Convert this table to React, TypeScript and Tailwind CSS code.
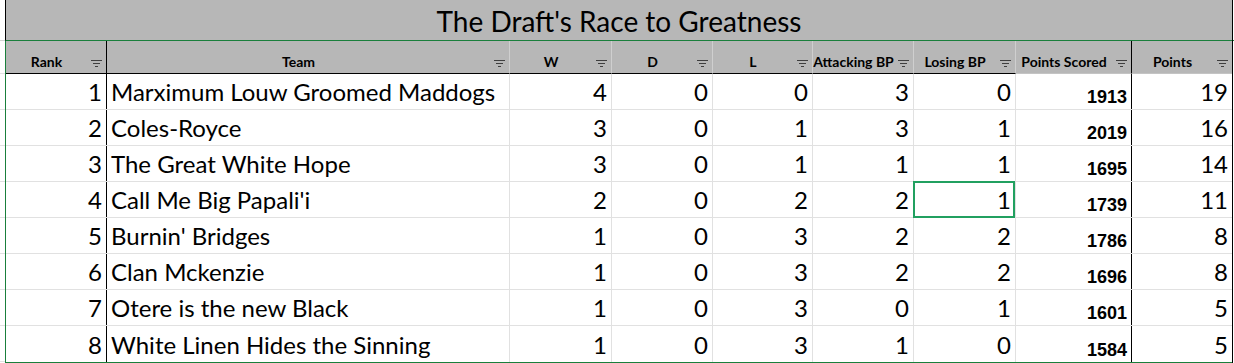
import React from 'react';

type Row = {
  rank: number;
  team: string;
  w: number;
  d: number;
  l: number;
  abp: number;
  lbp: number;
  scored: number;
  points: number;
};

const rows: Row[] = [
  { rank: 1, team: 'Marximum Louw Groomed Maddogs', w: 4, d: 0, l: 0, abp: 3, lbp: 0, scored: 1913, points: 19 },
  { rank: 2, team: 'Coles-Royce', w: 3, d: 0, l: 1, abp: 3, lbp: 1, scored: 2019, points: 16 },
  { rank: 3, team: 'The Great White Hope', w: 3, d: 0, l: 1, abp: 1, lbp: 1, scored: 1695, points: 14 },
  { rank: 4, team: "Call Me Big Papali'i", w: 2, d: 0, l: 2, abp: 2, lbp: 1, scored: 1739, points: 11 },
  { rank: 5, team: "Burnin' Bridges", w: 1, d: 0, l: 3, abp: 2, lbp: 2, scored: 1786, points: 8 },
  { rank: 6, team: 'Clan Mckenzie', w: 1, d: 0, l: 3, abp: 2, lbp: 2, scored: 1696, points: 8 },
  { rank: 7, team: 'Otere is the new Black', w: 1, d: 0, l: 3, abp: 0, lbp: 1, scored: 1601, points: 5 },
  { rank: 8, team: 'White Linen Hides the Sinning', w: 1, d: 0, l: 3, abp: 1, lbp: 0, scored: 1584, points: 5 },
];

// column widths include the 1px right border
const cols = [
  { key: 'rank', label: 'Rank', w: 'w-[101px]', hb: 'border-r-black', bb: 'border-r-black' },
  { key: 'team', label: 'Team', w: 'w-[403px]', hb: 'border-r-[#cfcfcf]', bb: 'border-r-[#e1e1e1]' },
  { key: 'w', label: 'W', w: 'w-[102px]', hb: 'border-r-[#cfcfcf]', bb: 'border-r-[#e1e1e1]' },
  { key: 'd', label: 'D', w: 'w-[101px]', hb: 'border-r-[#cfcfcf]', bb: 'border-r-[#e1e1e1]' },
  { key: 'l', label: 'L', w: 'w-[100px]', hb: 'border-r-[#cfcfcf]', bb: 'border-r-[#e1e1e1]' },
  { key: 'abp', label: 'Attacking BP', w: 'w-[101px]', hb: 'border-r-[#cfcfcf]', bb: 'border-r-[#e1e1e1]' },
  { key: 'lbp', label: 'Losing BP', w: 'w-[102px]', hb: 'border-r-[#cfcfcf]', bb: 'border-r-[#e1e1e1]' },
  { key: 'scored', label: 'Points Scored', w: 'w-[116px]', hb: 'border-r-black', bb: 'border-r-black' },
] as const;

function FilterIcon() {
  return (
    <svg width="11" height="7" viewBox="0 0 11 7" className="block" fill="#3f3f3f">
      <rect x="0" y="0" width="11" height="1" />
      <rect x="2" y="3" width="7" height="1" />
      <rect x="4" y="6" width="3" height="1" />
    </svg>
  );
}

function HeaderCell({ label, className }: { label: string; className: string }) {
  return (
    <div className={`h-full flex items-end pb-[4px] bg-[#b7b7b7] ${className}`}>
      <span className="flex-1 text-center text-[14px] leading-none font-bold text-black whitespace-nowrap">
        {label}
      </span>
      <div className="w-[19px] shrink-0 flex justify-end pr-[4px] mb-[2px]">
        <FilterIcon />
      </div>
    </div>
  );
}

function NumCell({ value, className, selected }: { value: number; className: string; selected?: boolean }) {
  return (
    <div className={`relative h-full flex items-end justify-end pr-[4px] pb-[5px] text-[24px] leading-none ${className}`}>
      {value}
      {selected && (
        <div className="absolute -left-[1px] -top-[1px] right-0 -bottom-[1px] border-2 border-[#21a060]" />
      )}
    </div>
  );
}

export default function App() {
  return (
    <div className="w-[1234px] h-[363px] bg-white flex font-['Lato','Liberation_Sans',sans-serif] text-black overflow-hidden">
      {/* row-heading gutter */}
      <div className="w-[5px] flex flex-col">
        <div className="h-[41px] border-b border-[#d4d4d4]" />
        <div className="h-[33px] border-b border-[#e1e1e1]" />
        {rows.map(r => (
          <div key={r.rank} className="h-[36px] border-b border-[#e1e1e1]" />
        ))}
      </div>

      {/* sheet */}
      <div className="w-[1228px] flex flex-col border-r border-black">
        <div className="h-[41px] bg-[#b7b7b7] border-l border-l-black border-b border-b-[#1a7f3c] flex items-center justify-center">
          <span className="text-[28px] leading-none pt-[1px]">The Draft's Race to Greatness</span>
        </div>

        <div className="flex flex-col border-l border-b border-[#1a7f3c]">
          {/* column headers */}
          <div className="h-[33px] flex">
            {cols.map((c, i) => (
              <HeaderCell
                key={c.key}
                label={c.label}
                className={`${c.w} border-r ${c.hb} border-b ${i < 7 ? 'border-b-black' : 'border-b-[#c4c4c4]'}`}
              />
            ))}
            <HeaderCell label="Points" className="w-[100px] border-b border-b-[#c4c4c4]" />
          </div>

          {rows.map((r, idx) => (
            <div
              key={r.rank}
              className={`h-[36px] flex ${idx < rows.length - 1 ? 'border-b border-[#e1e1e1]' : ''}`}
            >
              <NumCell value={r.rank} className={`${cols[0].w} border-r ${cols[0].bb}`} />
              <div className={`${cols[1].w} h-full border-r ${cols[1].bb} flex items-end pl-[4px] pb-[5px] text-[24px] leading-none whitespace-nowrap`}>
                {r.team}
              </div>
              <NumCell value={r.w} className={`${cols[2].w} border-r ${cols[2].bb}`} />
              <NumCell value={r.d} className={`${cols[3].w} border-r ${cols[3].bb}`} />
              <NumCell value={r.l} className={`${cols[4].w} border-r ${cols[4].bb}`} />
              <NumCell value={r.abp} className={`${cols[5].w} border-r ${cols[5].bb}`} />
              <NumCell value={r.lbp} className={`${cols[6].w} border-r ${cols[6].bb}`} selected={r.rank === 4} />
              <div className={`${cols[7].w} h-full border-r ${cols[7].bb} flex items-end justify-end pr-[4px] pb-[3px] font-['Liberation_Sans',Arial,sans-serif] font-bold text-[18px] leading-none`}>
                {r.scored}
              </div>
              <NumCell value={r.points} className="w-[100px]" />
            </div>
          ))}
        </div>
      </div>

      <div className="flex-1 flex flex-col">
        <div className="h-[41px] border-b border-[#1a7f3c]" />
      </div>
    </div>
  );
}
